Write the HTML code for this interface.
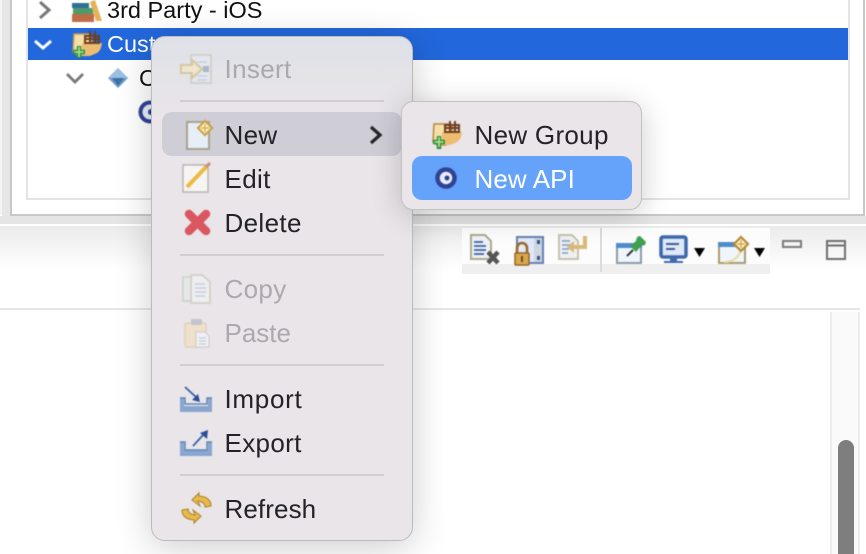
<!DOCTYPE html>
<html><head><meta charset="utf-8">
<style>
html,body{margin:0;padding:0;background:#fff}
#p{position:relative;width:866px;height:554px;overflow:hidden;background:#fff;font-family:"Liberation Sans",sans-serif}
.a{position:absolute}
.t{position:absolute;font-size:26px;line-height:32px;height:32px;white-space:nowrap;letter-spacing:.35px;color:#232226}
.d{color:#aba9ad}
.s{position:absolute;left:28px;width:204px;height:2px;background:#d1cdd1}
svg{position:absolute;left:0;top:0;filter:blur(.45px)}
</style></head><body>
<div id="p">
<!-- background chrome -->
<div class="a" style="left:0;top:0;width:2px;height:215px;background:#f4f4f4"></div>
<div class="a" style="left:2px;top:0;width:8px;height:216px;background:#e6e6e6"></div>
<div class="a" style="left:10px;top:0;width:855px;height:216px;box-sizing:border-box;border:2px solid #c8c8c5;border-top:0;background:#fff"></div>
<div class="a" style="left:26px;top:0;width:824px;height:200px;box-sizing:border-box;border:2px solid #e4e4e4;border-top:0;background:#fff"></div>
<div class="a" style="left:28px;top:28px;width:820px;height:32px;background:#2267db"></div>
<div class="a" style="left:0;top:216px;width:866px;height:8px;background:#e5e5e5"></div>
<div class="a" style="left:0;top:226px;width:866px;height:44px;background:linear-gradient(#ebebeb,#fff)"></div>
<div class="a" style="left:0;top:308px;width:860px;height:2px;background:#e6e6e6"></div>
<div class="a" style="left:830px;top:312px;width:30px;height:242px;box-sizing:border-box;background:#fafafa;border-left:2px solid #ececec;border-right:2px solid #ececec"></div>
<div class="a" style="left:838px;top:440px;width:16px;height:130px;border-radius:8px;background:#7e7e7e"></div>
<!-- toolbar -->
<div class="a" style="left:462px;top:228px;width:308px;height:36px;background:#fcfcfc"></div>
<div class="a" style="left:462px;top:264px;width:308px;height:10px;background:#efefef"></div>
<div class="a" style="left:600px;top:228px;width:2px;height:44px;background:#dcdcdc"></div>
<!-- tree text -->
<div class="t" style="left:107px;top:-6px;color:#111;font-size:23.5px;letter-spacing:0">3rd Party - iOS</div>
<div class="t" style="left:107px;top:28px;color:#fff;font-size:23.5px;letter-spacing:0">Cust</div>
<div class="t" style="left:139px;top:62px;color:#111;font-size:23.5px;letter-spacing:0">C</div>
<svg width="866" height="554" viewBox="0 0 866 554">
 <path d="M40 2l9 8-9 8" fill="none" stroke="#777" stroke-width="3"/>
 <path d="M35 41l8 7 8-7" fill="none" stroke="#fff" stroke-width="3"/>
 <path d="M67 74l8 8 8-8" fill="none" stroke="#777" stroke-width="2.800"/>
 <!-- books -->
 <rect x="72" y="14" width="22" height="8" fill="#bd6c46"/>
 <rect x="73" y="8" width="20" height="6" fill="#4f9a6c"/>
 <rect x="72" y="3" width="17" height="5" fill="#2f6f94"/>
 <path d="M90 2l5-2 7 21h-6z" fill="#e3b25a"/>
 <!-- group icon -->
 <path d="M74 34h15l3 4v12l-6 5H77l-4-3z" fill="#f7dfa8" stroke="#c69a58" stroke-width="1.500"/>
 <path d="M82 43h20q-1 8-5 10l-7 3h-8z" fill="#eebc70"/>
 <path d="M85 36h14v7H85zM90 31v12M95 31v12M84 39h16" fill="none" stroke="#6d3f20" stroke-width="2"/>
 <path d="M79 46v12M73 52h12" stroke="#2f8f3a" stroke-width="4.500"/>
 <path d="M79 47v10M74.500 52h9" stroke="#a6e08d" stroke-width="1.800"/>
 <!-- diamond -->
 <path d="M118 68l10 10-10 10-10-10z" fill="#6e9bcb"/><path d="M118 68l10 10h-20z" fill="#9cc0e3"/><path d="M112 78h12l-6 8z" fill="#3f6fa6"/>
 <!-- api -->
 <circle cx="150" cy="112" r="9.500" fill="#e8ecf8" stroke="#2f4396" stroke-width="4"/><circle cx="151" cy="112" r="3" fill="#2f4396"/>
 <!-- toolbar icons -->
 <path d="M471 235h14l6 6v18h-20z" fill="#eef2f8" stroke="#b0a98c" stroke-width="2"/>
 <path d="M474 242h9M474 246h12M474 250h12M474 254h10" stroke="#4d6fa8" stroke-width="2"/>
 <path d="M488 252l10 11M498 252l-10 11" stroke="#555" stroke-width="4.500"/>
 <rect x="517" y="237" width="26" height="26" fill="#dfe9f7" stroke="#6283b4" stroke-width="2"/>
 <rect x="534" y="238" width="8" height="24" fill="#cfd6e0"/><rect x="537" y="240" width="3" height="4" fill="#34558c"/><rect x="537" y="256" width="3" height="4" fill="#34558c"/>
 <path d="M517 253v-5a5 5 0 0 1 10 0v5" fill="none" stroke="#9a6a2b" stroke-width="2.600"/>
 <rect x="515" y="253" width="14" height="12" rx="1" fill="#d6a84b" stroke="#96642a" stroke-width="1.500"/><rect x="521" y="256" width="2" height="6" fill="#6d4a1d"/>
 <path d="M559 235h13l6 6v18h-19z" fill="#eef0f4" stroke="#c9c3ac" stroke-width="2"/>
 <path d="M562 241h8M562 245h9M562 249h7M562 253h6" stroke="#8ea5c9" stroke-width="1.800"/>
 <path d="M585 236v11h-14" fill="none" stroke="#dcb878" stroke-width="4"/><path d="M574 241l-7 6 7 6z" fill="#dcb878"/>
 <rect x="617" y="244" width="24" height="19" fill="#eef5fc" stroke="#8c9aa8" stroke-width="2"/>
 <rect x="616" y="243" width="26" height="5" fill="#4f8ccc"/>
 <path d="M627 256l6-6" stroke="#334" stroke-width="2"/>
 <path d="M630 246l6-5 1-4 3-1 6 6-1 3-4 1-5 6z" fill="#3fa04f"/>
 <rect x="661" y="237" width="25" height="20" rx="2" fill="#dfe8f6" stroke="#3f68ad" stroke-width="3.500"/>
 <path d="M666 244h13M666 249h9" stroke="#3f5f99" stroke-width="2"/>
 <path d="M670 258h7v3h6v2h-19v-2h6z" fill="#3f68ad"/>
 <path d="M694 248h11l-5.500 9z" fill="#000"/>
 <rect x="719" y="244" width="26" height="19" fill="#eef5fc" stroke="#a89c6f" stroke-width="2"/>
 <rect x="718" y="242" width="22" height="5" fill="#4f8ccc"/>
 <path d="M724 262q13 0 17-12" fill="none" stroke="#ecd9a0" stroke-width="2"/>
 <path d="M741 237l7 7-7 7-7-7z" fill="#fff5d8" stroke="#b38a3a" stroke-width="2.200"/><path d="M741 240v8M737 244h8" stroke="#d8a93f" stroke-width="1.500"/>
 <path d="M754 248h11l-5.500 9z" fill="#000"/>
 <rect x="783" y="241" width="18" height="6" fill="none" stroke="#7b7b7b" stroke-width="2"/>
 <rect x="827" y="241" width="18" height="18" fill="none" stroke="#6f6f6f" stroke-width="2"/><path d="M827 245.500h18" stroke="#6f6f6f" stroke-width="2"/>
</svg>
<!-- main menu -->
<div class="a" style="left:151px;top:36px;width:262px;height:505px;box-sizing:border-box;border:1px solid #bdbabd;border-radius:14px;background:linear-gradient(#dee1e8 0,#e9e5e8 80px);box-shadow:0 6px 36px rgba(0,0,0,.2)">
</div>
<div class="a" style="left:162px;top:112px;width:240px;height:44px;border-radius:10px;background:#cfcdd5"></div>
<div class="s" style="left:180px;top:100px"></div>
<div class="s" style="left:180px;top:254px"></div>
<div class="s" style="left:180px;top:364px"></div>
<div class="s" style="left:180px;top:474px"></div>
<div class="t d" style="left:224.5px;top:53px">Insert</div>
<div class="t" style="left:224.5px;top:119px">New</div>
<div class="t" style="left:224.5px;top:163px">Edit</div>
<div class="t" style="left:224.5px;top:207px">Delete</div>
<div class="t d" style="left:224.5px;top:273px">Copy</div>
<div class="t d" style="left:224.5px;top:317px;letter-spacing:0">Paste</div>
<div class="t" style="left:224.5px;top:383px;letter-spacing:.7px">Import</div>
<div class="t" style="left:224.5px;top:427px">Export</div>
<div class="t" style="left:224.5px;top:493px;letter-spacing:.1px">Refresh</div>
<!-- submenu -->
<div class="a" style="left:401px;top:101px;width:241px;height:109px;box-sizing:border-box;border:1px solid #c4c1c4;border-radius:12px;background:#e9e5e8;box-shadow:0 5px 30px rgba(0,0,0,.2)"></div>
<div class="a" style="left:412px;top:156px;width:220px;height:44px;border-radius:10px;background:#65a2f9"></div>
<div class="t" style="left:474.5px;top:119px;letter-spacing:.3px">New Group</div>
<div class="t" style="left:474.5px;top:163px;color:#fff;letter-spacing:.1px">New API</div>
<svg width="866" height="554" viewBox="0 0 866 554">
 <path d="M371 127l9 8-9 8" fill="none" stroke="#232226" stroke-width="3.200"/>
 <!-- insert -->
 <rect x="191" y="55" width="20" height="28" fill="#e3e7ee" stroke="#d0cfc8" stroke-width="1.800"/>
 <path d="M197 62h10M197 76h10M197 80h10" stroke="#c8d1de" stroke-width="1.500"/>
 <rect x="203" y="66" width="6" height="6" fill="#a9b6cb"/>
 <path d="M181 65h11v-5l10 9-10 9v-5h-11z" fill="#efe6cf" stroke="#d6c7a0" stroke-width="2"/>
 <!-- new -->
 <path d="M187 122h22v27h-22z" fill="#e8eef8" stroke="#a9a48c" stroke-width="2"/>
 <path d="M205 121l7 7-7 7-7-7z" fill="#fff6d5" stroke="#c9a24a" stroke-width="2.200"/><path d="M205 124v8M201 128h8" stroke="#d8ad46" stroke-width="1.400"/>
 <!-- edit -->
 <rect x="183" y="165" width="25" height="27" fill="#f6f5f3" stroke="#b5b2aa" stroke-width="1.400"/>
 <path d="M187 187l20-21" stroke="#eeba3e" stroke-width="4"/><path d="M206 167l4-4" stroke="#c98f7a" stroke-width="3"/>
 <!-- delete -->
 <path d="M189 214l17 17M206 214l-17 17" stroke="#d95760" stroke-width="8.500" stroke-linecap="round"/>
 <!-- copy -->
 <rect x="183" y="277" width="17" height="24" fill="#e6e7ea" stroke="#d0cfc9" stroke-width="1.500"/>
 <path d="M191 275h11l8 7v21h-19z" fill="#edeef0" stroke="#d3d0c5" stroke-width="1.800"/>
 <path d="M195 284h10M195 288h11M195 292h11M195 296h10" stroke="#c6cee0" stroke-width="1.600"/>
 <!-- paste -->
 <rect x="185" y="323" width="21" height="24" rx="2" fill="#eee0ca" stroke="#dfd2bb" stroke-width="1.500"/>
 <rect x="191" y="319" width="11" height="6" rx="2" fill="#c3c5cc"/>
 <path d="M196 332h9l4 4v11h-13z" fill="#f0f0f2" stroke="#ccc" stroke-width="1"/>
 <path d="M199 338h7M199 341h7M199 344h7" stroke="#c6cce0" stroke-width="1.200"/>
 <!-- import -->
 <path d="M180 398h32v14h-32z" fill="#88a6cf"/>
 <path d="M184 398h24v8h-24z" fill="#e9e5e8"/>
 <path d="M180 398h5v6h22v-6h5" fill="none" stroke="#5f86b8" stroke-width="1.500"/>
 <path d="M185 387l12 11" stroke="#3a5fa8" stroke-width="1.800"/><path d="M200 402l-8-2 6-6z" fill="#2a4f96"/>
 <!-- export -->
 <path d="M180 442h32v14h-32z" fill="#88a6cf"/>
 <path d="M184 442h24v8h-24z" fill="#e9e5e8"/>
 <path d="M180 442h5v8h22v-8h5" fill="none" stroke="#5f86b8" stroke-width="1.500"/>
 <path d="M193 446l11-12" stroke="#3a64a8" stroke-width="1.800"/><path d="M208 430l-1 9-7-6z" fill="#2a4f96"/>
 <!-- refresh -->
 <path d="M188 509q0 5 7 6l-2-5 8 6-7 7 0-3q-12-1-12-10z" fill="#e8ba4a" stroke="#a87f2a" stroke-width="1"/>
 <path d="M205 507q0-5-7-6l2 5-8-6 7-7 0 3q12 1 12 10z" fill="#e8ba4a" stroke="#a87f2a" stroke-width="1"/>
 <!-- new group -->
 <path d="M434 124h15l3 3v13l-6 5h-9l-4-3z" fill="#f7dfa8" stroke="#b98744" stroke-width="1.500"/>
 <path d="M442 132h20q-1 8-5 10l-7 3h-8z" fill="#eebc70"/>
 <path d="M445 125h14v7h-14zM450 121v11M455 121v11M444 128h16" fill="none" stroke="#6d3f20" stroke-width="2"/>
 <path d="M439 136v13M433 142h12" stroke="#2f8f3a" stroke-width="4.500"/>
 <path d="M439 137v10M434.500 142h9" stroke="#a6e08d" stroke-width="1.800"/>
 <!-- new api -->
 <circle cx="446" cy="178" r="8.500" fill="#e9eefa" stroke="#2f4396" stroke-width="4.500"/><circle cx="447" cy="178" r="2.500" fill="#2f4396"/>
</svg>
</div>
</body></html>
